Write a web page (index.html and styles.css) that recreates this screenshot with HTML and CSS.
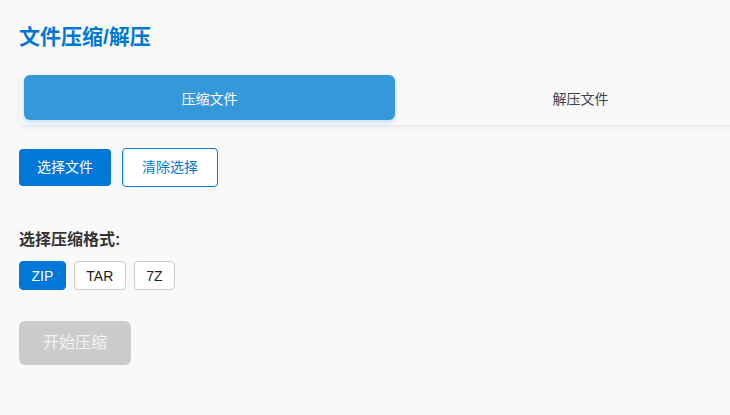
FILE: index.html
```html
<!DOCTYPE html>
<html lang="zh-CN">
<head>
<meta charset="utf-8">
<title>文件压缩/解压</title>
<link rel="stylesheet" href="styles.css">
</head>
<body>
<div class="container">
  <h2 class="title">文件压缩/解压</h2>
  <div class="tabs">
    <div class="tab active">压缩文件</div>
    <div class="tab">解压文件</div>
  </div>
  <div class="actions">
    <button class="btn btn-primary">选择文件</button>
    <button class="btn btn-outline">清除选择</button>
  </div>
  <div class="format">
    <div class="format-label">选择压缩格式:</div>
    <div class="format-options">
      <button class="fmt active">ZIP</button>
      <button class="fmt">TAR</button>
      <button class="fmt">7Z</button>
    </div>
  </div>
  <button class="start" disabled>开始压缩</button>
</div>
</body>
</html>
```
FILE: styles.css
```css
html, body {
  margin: 0;
  padding: 0;
  background: #ffffff;
  overflow: hidden;
}
body {
  font-family: "Liberation Sans", "Noto Sans CJK SC", sans-serif;
  color: #333;
}
.container {
  width: 752px;
  padding: 22px 19px 50px 19px;
  background: #f9f9f9;
  border-radius: 8px;
  box-shadow: 0 0 10px rgba(0, 0, 0, 0.08);
}
.title {
  margin: 0 0 18px 0;
  font-size: 21px;
  line-height: 30px;
  font-weight: bold;
  color: #0078d7;
}
.tabs {
  display: flex;
  padding: 5px;
  background: #f9f9f9;
  border-radius: 8px;
  box-shadow: 0 2px 4px rgba(0, 0, 0, 0.08);
  margin-bottom: 23px;
}
.tab {
  flex: 1;
  height: 45px;
  display: flex;
  align-items: center;
  justify-content: center;
  font-size: 14px;
  color: #3a4250;
  border-radius: 6px;
}
.tab.active {
  background: #3498db;
  color: #ffffff;
  box-shadow: 0 2px 5px rgba(52, 152, 219, 0.3);
}
.actions {
  display: flex;
  align-items: center;
  gap: 10px;
}
.btn {
  font-family: inherit;
  font-size: 14px;
  line-height: 17px;
  border-radius: 4px;
  cursor: pointer;
}
.btn-primary {
  background: #0078d7;
  color: #ffffff;
  border: none;
  padding: 10px 18px;
  height: 37px;
}
.btn-outline {
  background: #ffffff;
  color: #0078d7;
  border: 1px solid #0078d7;
  padding: 10px 19px;
  height: 39px;
  margin-left: 1px;
}
.format {
  margin-top: 41px;
}
.format-label {
  font-size: 16px;
  font-weight: bold;
  line-height: 24px;
  color: #333;
}
.format-options {
  display: flex;
  gap: 8px;
  margin-top: 9px;
}
.fmt {
  font-family: inherit;
  font-size: 14px;
  line-height: 16px;
  height: 29px;
  padding: 5px 11.5px;
  border: 1px solid #ccc;
  border-radius: 4px;
  background: #ffffff;
  color: #222;
}
.fmt.active {
  background: #0078d7;
  border-color: #0078d7;
  color: #ffffff;
}
.start {
  display: block;
  margin-top: 31px;
  font-family: inherit;
  font-size: 16px;
  line-height: 20px;
  height: 44px;
  padding: 12px 24px;
  border: none;
  border-radius: 6px;
  background: #cccccc;
  color: #f2f2f2;
}
```
